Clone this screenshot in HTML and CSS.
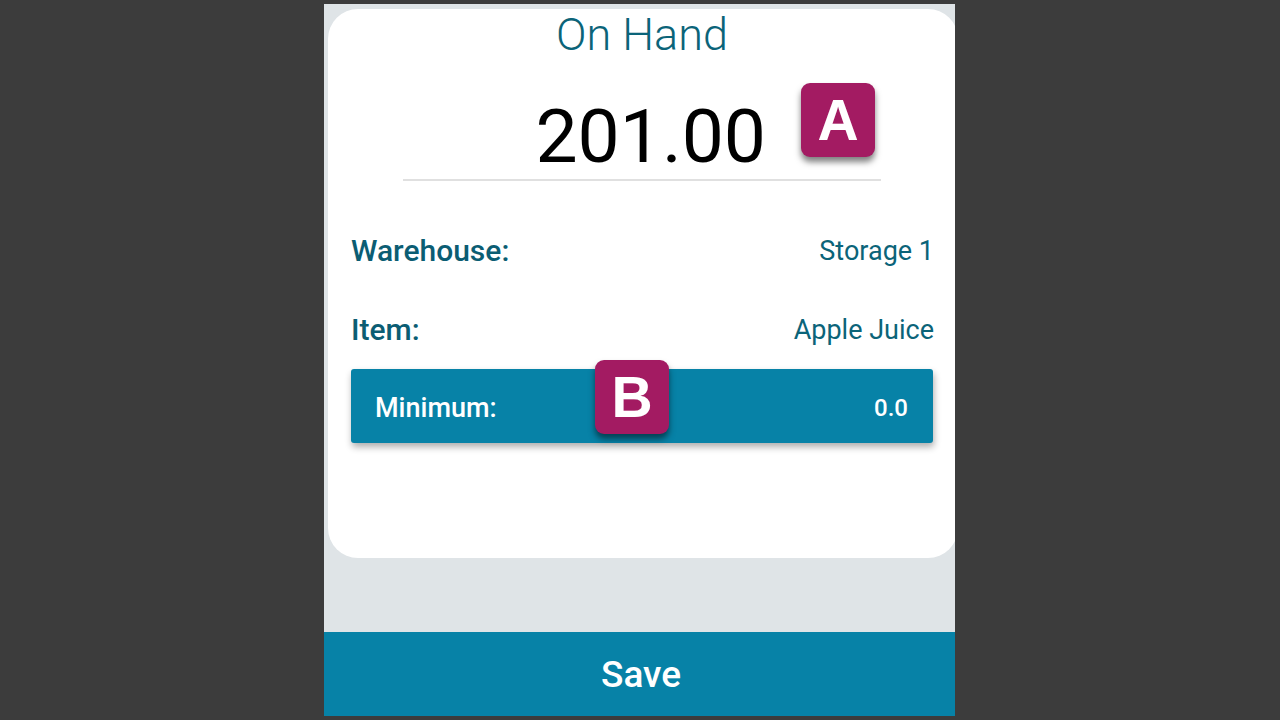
FILE: index.html
```html
<!DOCTYPE html>
<html>
<head>
<meta charset="utf-8">
<link rel="stylesheet" href="styles.css">
</head>
<body>
<div class="phone">
  <div class="card">
    <div class="title">On Hand</div>
    <div class="qty">
      <span class="qty-value">201.00</span>
      <div class="badge badge-a">A</div>
    </div>
    <div class="details">
      <div class="row">
        <span class="label">Warehouse:</span>
        <span class="value">Storage 1</span>
      </div>
      <div class="row">
        <span class="label">Item:</span>
        <span class="value">Apple Juice</span>
      </div>
    </div>
    <div class="min-bar">
      <span class="min-label">Minimum:</span>
      <span class="min-value">0.0</span>
      <div class="badge badge-b">B</div>
    </div>
  </div>
  <div class="save">Save</div>
</div>
</body>
</html>
```
FILE: styles.css
```css
* { box-sizing: border-box; }
html, body { margin: 0; padding: 0; }
body {
  background: #3c3c3c;
  display: flex;
  justify-content: flex-start;
  padding: 4px 0 0 324px;
  height: 720px;
  overflow: hidden;
  font-family: Roboto, "Liberation Sans", sans-serif;
}
.phone {
  width: 631px;
  height: 712px;
  background: #dfe4e7;
  display: flex;
  flex-direction: column;
  overflow: hidden;
}
.card {
  flex: none;
  height: 549px;
  margin: 5px -3px 0 4px;
  background: #ffffff;
  border-radius: 30px;
  padding: 0 25px 0 23px;
  display: flex;
  flex-direction: column;
}
.title {
  font-weight: 300;
  font-size: 45px;
  line-height: 52px;
  color: #0b6479;
  text-align: center;
}
.qty {
  position: relative;
  width: 478px;
  height: 88px;
  margin: 32px auto 0;
  border-bottom: 2px solid #e0e0e0;
  text-align: right;
  padding-right: 115px;
}
.qty-value {
  font-size: 75px;
  line-height: 86px;
  color: #000;
}
.badge {
  position: absolute;
  width: 74px;
  height: 74px;
  border-radius: 9px;
  background: #a31b62;
  color: #fff;
  font-family: "Liberation Sans", Arial, sans-serif;
  font-weight: bold;
  font-size: 57px;
  display: flex;
  align-items: center;
  justify-content: center;
  box-shadow: 0 5px 6px rgba(0, 0, 0, 0.5);
}
.badge-a { right: 6px; top: -10px; }
.badge-b { left: 244px; top: -9px; }
.details {
  margin-top: 50px;
  display: flex;
  flex-direction: column;
  gap: 39px;
}
.row {
  height: 40px;
  display: flex;
  justify-content: space-between;
  align-items: center;
  line-height: 40px;
  margin-right: -1px;
}
.label {
  font-weight: 500;
  font-size: 30px;
  color: #0b5d73;
}
.value {
  font-size: 27px;
  color: #0b6479;
}
.min-bar {
  position: relative;
  margin-top: 19px;
  height: 74px;
  background: #0782a7;
  border-radius: 3px;
  box-shadow: 1px 4px 7px rgba(0, 0, 0, 0.32);
  display: flex;
  justify-content: space-between;
  align-items: center;
  padding: 3px 25px 0 24px;
  color: #fff;
  font-weight: 500;
}
.min-label { font-size: 27px; }
.min-value { font-size: 24px; }
.save {
  margin-top: auto;
  height: 84px;
  background: #0782a7;
  color: #fff;
  font-weight: 500;
  font-size: 37px;
  display: flex;
  align-items: center;
  justify-content: center;
  padding-left: 3px;
}
```
